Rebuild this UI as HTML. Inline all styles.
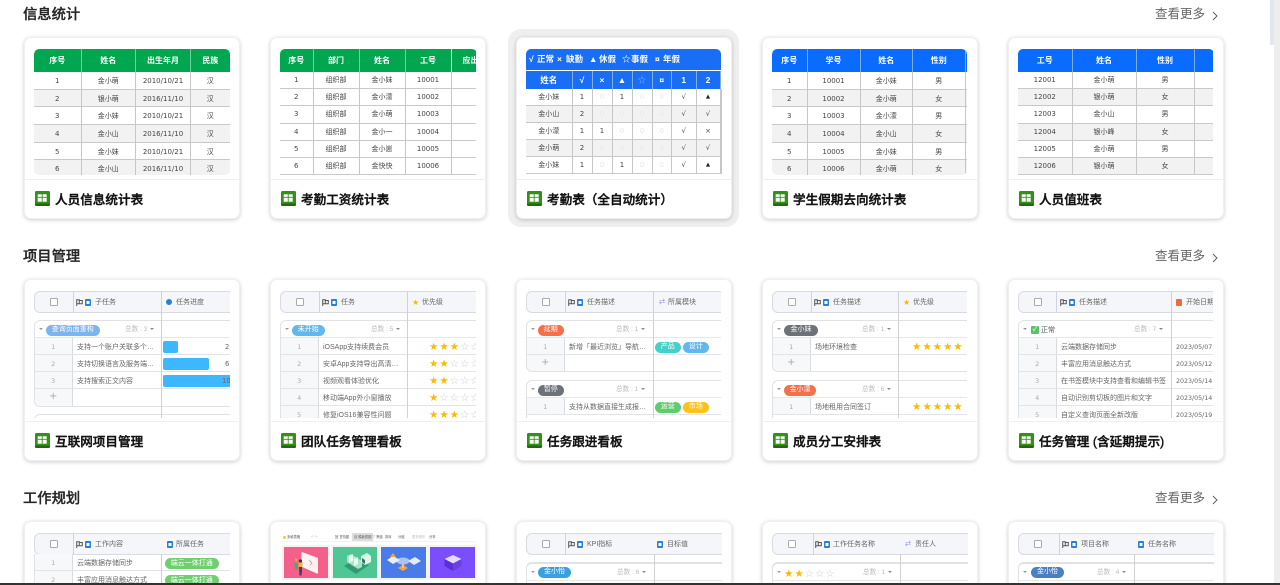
<!DOCTYPE html>
<html lang="zh-CN">
<head>
<meta charset="utf-8">
<title>模板</title>
<style>
*{box-sizing:border-box;margin:0;padding:0}
html,body{width:1280px;height:585px;overflow:hidden;background:#fff}
body{position:relative;font-family:"Liberation Sans","Noto Sans CJK SC",sans-serif;color:#333}
.h{position:absolute;left:23px;font-size:14.3px;line-height:20px;color:#262626;font-weight:500;-webkit-text-stroke:.3px #262626;filter:blur(.25px)}
.m{position:absolute;left:1155px;font-size:12.5px;line-height:20px;color:#666;filter:blur(.2px)}
.ch{position:absolute;left:1211px;width:8px;height:10px}
.ring{position:absolute;left:508px;top:29px;width:231px;height:198px;background:#efefef;border-radius:13px}
.c{position:absolute;width:216px;height:182px;background:#fff;border-radius:7px;border:1px solid #f0f0f0;box-shadow:0 1px 4px rgba(0,0,0,.2);overflow:hidden}
.c.low{height:62px;border-bottom:0;border-radius:7px 7px 0 0}
.pv{position:absolute;left:9px;top:11px;width:196px;height:126px;overflow:hidden;filter:blur(.3px)}
.pv.k{height:127px}
.low .pv.k{height:50px}
.ft{position:absolute;left:0;top:141px;width:214px;height:40px;border-top:1px solid #f0f0f0}
.ic{position:absolute;left:10px;top:11px;width:15px;height:15px}
.tt{position:absolute;left:30px;top:10px;font-size:12.6px;line-height:20px;font-weight:500;color:#111;-webkit-text-stroke:.4px #111;white-space:nowrap;filter:blur(.2px)}
table{border-collapse:collapse;table-layout:fixed;font-size:7px;color:#444;text-align:center;position:absolute;left:0;top:0}
th{height:22.5px;color:#fff;font-size:8px;font-weight:700;border-right:1px solid rgba(255,255,255,.45)}
td{border-right:1px solid #c6c6c6;border-bottom:1px solid #c9c9c9;font-family:"DejaVu Sans","Noto Sans CJK SC",sans-serif;overflow:hidden;white-space:nowrap}
.gr th{background:#00a650}.bl th{background:#0a6cff}
.a td{height:17.7px;padding-top:1px}.b td{height:17.2px}
.z tr:nth-child(even) td{background:#f2f2f2}
.rd{border-radius:5px 5px 0 0;overflow:hidden}
.pv.t{border-radius:5px}
.ban{position:absolute;left:0;top:0;width:195px;height:21px;background:#1a6df5;border-radius:5px 5px 0 0;color:#fff;font-size:8.5px;font-weight:700;line-height:21px;white-space:nowrap}
.ban span{position:absolute;top:0}
.att{top:22px}
.att th{height:17.5px;background:#1a6df5;font-size:8.5px;border-right:1px solid rgba(255,255,255,.45)}
.att td{height:17.1px}
.att td.o{color:#e8e8e8}
.att td.s{font-size:5.5px;color:#222}
.hd{position:absolute;left:0;top:0;width:230px;height:21.5px;background:#f5f6fa;border:1px solid #d8dbe2;border-radius:6px;font-size:7px;color:#666}
.cb{position:absolute;top:6px;width:7.5px;height:7.5px;border:1px solid #aaa;border-radius:1.5px;background:#fff}
.hl{position:absolute;top:-1px;bottom:-1px;width:1px;background:#d0d3d8}
.vl{position:absolute;top:0;bottom:0;width:1.2px;background:#cfd1d5;z-index:3}
.lb{position:absolute;top:0;line-height:22px;white-space:nowrap}
.fl{position:absolute;top:6.500px;width:7px;height:7px}
.dc{position:absolute;top:6.500px;width:6px;height:7px}
.g{position:absolute;left:0;width:240px;border:1px solid #e0e2e6;border-radius:6px;overflow:hidden;background:#fff}
.gh{position:relative;height:17px;border-bottom:1.4px solid #e6e7ea}
.ar{position:absolute;left:4px;top:7px;width:0;height:0;border-left:2px solid transparent;border-right:2px solid transparent;border-top:2.5px solid #999}
.p{position:absolute;left:11px;top:4px;height:10.5px;line-height:10.5px;border-radius:6px;color:#fff;font-size:7px;text-align:center;white-space:nowrap}
.tot{position:absolute;top:0;line-height:18.500px;font-size:6.6px;color:#bbb;white-space:nowrap}
.tot:after{content:"";display:inline-block;margin-left:3px;vertical-align:1px;border-left:2px solid transparent;border-right:2px solid transparent;border-top:2.5px solid #888}
.r{position:relative;height:17.1px;border-bottom:1px solid #e3e4e8;font-size:7px;color:#666;white-space:nowrap}
.n{position:absolute;left:0;top:0;height:100%;background:#f7f8fa;border-right:1px solid #d8dbe0;text-align:center;line-height:18px;color:#aaa;font-size:6.5px;font-family:"DejaVu Sans",sans-serif}
.x{position:absolute;top:0;line-height:19.500px}
.st{position:absolute;top:0;line-height:18px;font-family:"DejaVu Sans",sans-serif;font-size:10.5px;letter-spacing:.9px;color:#fcb900}
.st u{text-decoration:none;color:#ccc}
.bar{position:absolute;left:1.5px;top:2.5px;height:12.5px;background:#3db8ff;border-radius:2px}
.v{position:absolute;top:0;line-height:19px;color:#666;font-family:"DejaVu Sans",sans-serif;font-size:6.8px}
.d{font-family:"DejaVu Sans",sans-serif;font-size:6.3px}
.tile{position:absolute;top:13.500px;width:44.5px;height:31.5px;box-shadow:0 0 0 2px #f4f4f4}
.tb{position:absolute;left:0;top:0;width:196px;height:8.500px;font-size:3.3px;line-height:8px;color:#555;white-space:nowrap;background:#fff;border-bottom:1px solid #f2f2f2}
.tb span{position:absolute;top:0}
.sb{position:absolute;left:1274px;top:0;width:6px;height:585px;background:#eee}
.th{position:absolute;left:1270px;top:0;width:4.3px;height:45px;background:#e1e6ef;border-radius:0 0 1px 1px}
.bot{position:absolute;left:0;top:583px;width:1280px;height:2px;background:#333}
</style>
</head>
<body>
<svg width="0" height="0" style="position:absolute">
<defs>
<symbol id="fi" viewBox="0 0 15 15"><rect width="15" height="15" rx="1.5" fill="#35901a"/><path d="M0 12.500h15v1A1.500 1.500 0 0 1 13.500 15h-12A1.500 1.500 0 0 1 0 13.500z" fill="#1f6a0c"/><rect x="2.700" y="3.300" width="9" height="7.400" fill="#fff"/><path d="M2.700 6.300h9M7.200 3.300v7.400" stroke="#35901a" stroke-width=".9"/></symbol>
<symbol id="fg" viewBox="0 0 7 7"><path d="M.7 7V.7h2.600v4H.7M3.300 1.500H6.300V4.700H3.300" fill="none" stroke="#555" stroke-width="1"/></symbol>
<symbol id="dc" viewBox="0 0 6 7"><rect width="6" height="7" rx="1" fill="#2a7fd9"/><rect x="1.500" y="2" width="3" height="3" fill="#fff"/></symbol>
<symbol id="chv" viewBox="0 0 8 10"><path d="M2 1l4 4-4 4" fill="none" stroke="#555" stroke-width=".9"/></symbol>
</defs>
</svg>

<div class="h" style="top:5px">信息统计</div>
<div class="m" style="top:4px">查看更多</div><svg class="ch" style="top:11px"><use href="#chv"/></svg>

<div class="c" style="left:24px;top:37px"><div class="pv t"><table class="gr z a rd" style="width:196px"><colgroup><col style="width:47px"><col style="width:54.500px"><col style="width:55px"><col style="width:39.500px"></colgroup>
<thead><tr><th>序号</th><th>姓名</th><th>出生年月</th><th>民族</th></tr></thead>
<tbody><tr><td>1</td><td>金小萌</td><td>2010/10/21</td><td>汉</td></tr><tr><td>2</td><td>银小萌</td><td>2016/11/10</td><td>汉</td></tr><tr><td>3</td><td>金小妹</td><td>2010/10/21</td><td>汉</td></tr><tr><td>4</td><td>金小山</td><td>2016/11/10</td><td>汉</td></tr><tr><td>5</td><td>金小妹</td><td>2010/10/21</td><td>汉</td></tr><tr><td>6</td><td>金小山</td><td>2016/11/10</td><td>汉</td></tr></tbody></table></div>
<div class="ft"><svg class="ic"><use href="#fi"/></svg><div class="tt">人员信息统计表</div></div></div>

<div class="c" style="left:270px;top:37px"><div class="pv"><table class="gr b rd" style="width:196px"><colgroup><col style="width:33px"><col style="width:46px"><col style="width:46px"><col style="width:46px"><col style="width:25px"></colgroup>
<thead><tr><th>序号</th><th>部门</th><th>姓名</th><th>工号</th><th style="text-align:left;padding-left:11px;white-space:nowrap;overflow:hidden;border:0">应出</th></tr></thead>
<tbody><tr><td>1</td><td>组织部</td><td>金小妹</td><td>10001</td><td></td></tr><tr><td>2</td><td>组织部</td><td>金小濛</td><td>10002</td><td></td></tr><tr><td>3</td><td>组织部</td><td>金小萌</td><td>10003</td><td></td></tr><tr><td>4</td><td>组织部</td><td>金小一</td><td>10004</td><td></td></tr><tr><td>5</td><td>组织部</td><td>金小崽</td><td>10005</td><td></td></tr><tr><td>6</td><td>组织部</td><td>金快快</td><td>10006</td><td></td></tr></tbody></table></div>
<div class="ft"><svg class="ic"><use href="#fi"/></svg><div class="tt">考勤工资统计表</div></div></div>

<div class="ring"></div>
<div class="c" style="left:516px;top:37px"><div class="pv"><div class="ban"><span style="left:3px">√</span><span style="left:11px">正常</span><span style="left:31px">×</span><span style="left:40px">缺勤</span><span style="left:63px">▲</span><span style="left:73px">休假</span><span style="left:96px">☆</span><span style="left:105px">事假</span><span style="left:129px">¤</span><span style="left:137px">年假</span></div>
<table class="att z" style="width:195px"><colgroup><col style="width:46px"><col style="width:20px"><col style="width:20px"><col style="width:20px"><col style="width:20px"><col style="width:19.500px"><col style="width:24.500px"><col style="width:24px"><col style="width:1px"></colgroup>
<thead><tr><th>姓名</th><th>√</th><th>×</th><th>▲</th><th style="color:#7fa9f5">☆</th><th>¤</th><th>1</th><th>2</th><th></th></tr></thead>
<tbody><tr><td>金小妹</td><td>1</td><td class="o">0</td><td>1</td><td class="o">0</td><td class="o">0</td><td>√</td><td class="s">▲</td><td></td></tr><tr><td>金小山</td><td>2</td><td class="o">0</td><td class="o">0</td><td class="o">0</td><td class="o">0</td><td>√</td><td>√</td><td></td></tr><tr><td>金小濛</td><td>1</td><td>1</td><td class="o">0</td><td class="o">0</td><td class="o">0</td><td>√</td><td>×</td><td></td></tr><tr><td>金小萌</td><td>2</td><td class="o">0</td><td class="o">0</td><td class="o">0</td><td class="o">0</td><td>√</td><td>√</td><td></td></tr><tr><td>金小妹</td><td>1</td><td class="o">0</td><td>1</td><td class="o">0</td><td class="o">0</td><td>√</td><td class="s">▲</td><td></td></tr></tbody></table></div>
<div class="ft"><svg class="ic"><use href="#fi"/></svg><div class="tt">考勤表（全自动统计）</div></div></div>

<div class="c" style="left:762px;top:37px"><div class="pv t" style="width:195px"><table class="bl z a rd" style="width:195px"><colgroup><col style="width:35px"><col style="width:53px"><col style="width:52.500px"><col style="width:52.500px"><col style="width:2px"></colgroup>
<thead><tr><th>序号</th><th>学号</th><th>姓名</th><th>性别</th><th style="border:0"></th></tr></thead>
<tbody><tr><td>1</td><td>10001</td><td>金小妹</td><td>男</td><td style="border-right:0"></td></tr><tr><td>2</td><td>10002</td><td>金小萌</td><td>女</td><td style="border-right:0"></td></tr><tr><td>3</td><td>10003</td><td>金小濛</td><td>男</td><td style="border-right:0"></td></tr><tr><td>4</td><td>10004</td><td>金小山</td><td>女</td><td style="border-right:0"></td></tr><tr><td>5</td><td>10005</td><td>金小妹</td><td>男</td><td style="border-right:0"></td></tr><tr><td>6</td><td>10006</td><td>金小萌</td><td>女</td><td style="border-right:0"></td></tr></tbody></table></div>
<div class="ft"><svg class="ic"><use href="#fi"/></svg><div class="tt">学生假期去向统计表</div></div></div>

<div class="c" style="left:1008px;top:37px"><div class="pv" style="width:195px"><table class="bl z b rd" style="width:195px"><colgroup><col style="width:54px"><col style="width:64px"><col style="width:58px"><col style="width:19px"></colgroup>
<thead><tr><th>工号</th><th>姓名</th><th>性别</th><th style="border:0"></th></tr></thead>
<tbody><tr><td>12001</td><td>金小萌</td><td>男</td><td></td></tr><tr><td>12002</td><td>银小萌</td><td>女</td><td></td></tr><tr><td>12003</td><td>金小山</td><td>男</td><td></td></tr><tr><td>12004</td><td>银小峰</td><td>女</td><td></td></tr><tr><td>12005</td><td>金小萌</td><td>男</td><td></td></tr><tr><td>12006</td><td>银小萌</td><td>女</td><td></td></tr></tbody></table></div>
<div class="ft"><svg class="ic"><use href="#fi"/></svg><div class="tt">人员值班表</div></div></div>

<div class="h" style="top:247px">项目管理</div>
<div class="m" style="top:246px">查看更多</div><svg class="ch" style="top:253px"><use href="#chv"/></svg>

<div class="c" style="left:24px;top:279px"><div class="pv k">
<div class="hd"><span class="cb" style="left:15px"></span><span class="hl" style="left:37.500px"></span><svg class="fl" style="left:41px"><use href="#fg"/></svg><svg class="dc" style="left:50px"><use href="#dc"/></svg><span class="lb" style="left:60px">子任务</span>
<span style="position:absolute;left:131px;top:7px;width:6px;height:6px;border-radius:50%;background:#2a7fd9"></span><span class="lb" style="left:141px">任务进度</span></div>
<div class="vl" style="left:127px"></div>
<div class="g" style="top:29px;height:87px"><div class="gh"><span class="ar"></span><span class="p" style="width:53.500px;background:#7cb4f0">查询页面重构</span><span class="tot" style="left:90px">总数 : 3</span></div>
<div class="r"><span class="n" style="width:37.500px">1</span><span class="x" style="left:42px">支持一个账户关联多个…</span><span class="bar" style="left:128px;width:15px"></span><span class="v" style="left:190px">2</span></div>
<div class="r"><span class="n" style="width:37.500px">2</span><span class="x" style="left:42px">支持切换语言及服务端…</span><span class="bar" style="left:128px;width:46px"></span><span class="v" style="left:190px">6</span></div>
<div class="r"><span class="n" style="width:37.500px">3</span><span class="x" style="left:42px">支持搜索正文内容</span><span class="bar" style="left:128px;width:70px"></span><span class="v" style="left:187px">10</span></div>
<div class="r" style="border:0"><span class="n" style="width:37.500px;font-size:10px;line-height:16px">+</span></div></div>
<div class="g" style="top:123px;height:20px"></div>
</div>
<div class="ft"><svg class="ic"><use href="#fi"/></svg><div class="tt">互联网项目管理</div></div></div>

<div class="c" style="left:270px;top:279px"><div class="pv k">
<div class="hd"><span class="cb" style="left:15px"></span><span class="hl" style="left:37.500px"></span><svg class="fl" style="left:41px"><use href="#fg"/></svg><svg class="dc" style="left:50px"><use href="#dc"/></svg><span class="lb" style="left:60px">任务</span>
<span class="lb" style="left:131px;color:#fcb900;font-size:8px;font-family:'DejaVu Sans',sans-serif">★</span><span class="lb" style="left:141px">优先级</span></div>
<div class="vl" style="left:127px"></div>
<div class="g" style="top:29px;height:110px"><div class="gh"><span class="ar"></span><span class="p" style="width:32.500px;background:#62b8ec">未开始</span><span class="tot" style="left:90px">总数 : 5</span></div>
<div class="r"><span class="n" style="width:37.500px">1</span><span class="x" style="left:42px">iOSApp支持续费会员</span><span class="st" style="left:148px">★★★<u>☆☆</u></span></div>
<div class="r"><span class="n" style="width:37.500px">2</span><span class="x" style="left:42px">安卓App支持导出高清…</span><span class="st" style="left:148px">★★<u>☆☆☆</u></span></div>
<div class="r"><span class="n" style="width:37.500px">3</span><span class="x" style="left:42px">视频观看体验优化</span><span class="st" style="left:148px">★★<u>☆☆☆</u></span></div>
<div class="r"><span class="n" style="width:37.500px">4</span><span class="x" style="left:42px">移动端App外小窗播放</span><span class="st" style="left:148px">★<u>☆☆☆☆</u></span></div>
<div class="r"><span class="n" style="width:37.500px">5</span><span class="x" style="left:42px">修复iOS16兼容性问题</span><span class="st" style="left:148px">★★★<u>☆☆</u></span></div></div>
</div>
<div class="ft"><svg class="ic"><use href="#fi"/></svg><div class="tt">团队任务管理看板</div></div></div>

<div class="c" style="left:516px;top:279px"><div class="pv k" style="width:195px">
<div class="hd"><span class="cb" style="left:15px"></span><span class="hl" style="left:37.500px"></span><svg class="fl" style="left:41px"><use href="#fg"/></svg><svg class="dc" style="left:50px"><use href="#dc"/></svg><span class="lb" style="left:60px">任务描述</span>
<span class="lb" style="left:132px;color:#7a7adf;font-size:6px">⇄</span><span class="lb" style="left:141px">所属模块</span></div>
<div class="vl" style="left:126.500px"></div>
<div class="g" style="top:29px;height:52px"><div class="gh"><span class="ar"></span><span class="p" style="width:25.500px;background:#f4704a">延期</span><span class="tot" style="left:89px">总数 : 1</span></div>
<div class="r"><span class="n" style="width:37.500px">1</span><span class="x" style="left:42px">新增「最近浏览」导航…</span><span class="p" style="left:128px;top:4px;width:25.500px;background:#45d0c8">产品</span><span class="p" style="left:156px;top:4px;width:25.500px;background:#62b8ec">设计</span></div>
<div class="r" style="border:0"><span class="n" style="width:37.500px;font-size:10px;line-height:16px">+</span></div></div>
<div class="g" style="top:89px;height:50px"><div class="gh"><span class="ar"></span><span class="p" style="width:25.500px;background:#6d7179">暂停</span><span class="tot" style="left:89px">总数 : 1</span></div>
<div class="r"><span class="n" style="width:37.500px">1</span><span class="x" style="left:42px">支持从数据直接生成报…</span><span class="p" style="left:128px;top:4px;width:25.500px;background:#62ca6f">运营</span><span class="p" style="left:156px;top:4px;width:25.500px;background:#fbc21a">市场</span></div></div>
</div>
<div class="ft"><svg class="ic"><use href="#fi"/></svg><div class="tt">任务跟进看板</div></div></div>

<div class="c" style="left:762px;top:279px"><div class="pv k" style="width:195px">
<div class="hd"><span class="cb" style="left:15px"></span><span class="hl" style="left:37.500px"></span><svg class="fl" style="left:41px"><use href="#fg"/></svg><svg class="dc" style="left:50px"><use href="#dc"/></svg><span class="lb" style="left:60px">任务描述</span>
<span class="lb" style="left:130px;color:#fcb900;font-size:8px;font-family:'DejaVu Sans',sans-serif">★</span><span class="lb" style="left:140px">优先级</span></div>
<div class="vl" style="left:126px"></div>
<div class="g" style="top:29px;height:52px"><div class="gh"><span class="ar"></span><span class="p" style="left:11px;width:34px;background:#6d7179">金小妹</span><span class="tot" style="left:89px">总数 : 1</span></div>
<div class="r"><span class="n" style="width:37.500px">1</span><span class="x" style="left:42px">场地环境检查</span><span class="st" style="left:139px">★★★★★</span></div>
<div class="r" style="border:0"><span class="n" style="width:37.500px;font-size:10px;line-height:16px">+</span></div></div>
<div class="g" style="top:89px;height:50px"><div class="gh"><span class="ar"></span><span class="p" style="left:11px;width:32px;background:#f4704a">金小濛</span><span class="tot" style="left:89px">总数 : 6</span></div>
<div class="r"><span class="n" style="width:37.500px">1</span><span class="x" style="left:42px">场地租用合同签订</span><span class="st" style="left:139px">★★★★★</span></div></div>
</div>
<div class="ft"><svg class="ic"><use href="#fi"/></svg><div class="tt">成员分工安排表</div></div></div>

<div class="c" style="left:1008px;top:279px"><div class="pv k" style="width:195px">
<div class="hd"><span class="cb" style="left:15px"></span><span class="hl" style="left:37px"></span><svg class="fl" style="left:41px"><use href="#fg"/></svg><svg class="dc" style="left:50px"><use href="#dc"/></svg><span class="lb" style="left:60px">任务描述</span>
<span style="position:absolute;left:157px;top:6.500px;width:6px;height:7px;border-radius:1px;background:#ef6a3a"></span><span class="lb" style="left:167px">开始日期</span></div>
<div class="vl" style="left:152.500px"></div>
<div class="g" style="top:29px;height:110px"><div class="gh"><span class="ar"></span><span style="position:absolute;left:12px;top:4.500px;width:8px;height:8px;background:#5cc26a;border-radius:1px;color:#fff;font-size:7px;line-height:8px;text-align:center">✓</span><span style="position:absolute;left:22px;top:0;line-height:19px;font-size:7px;color:#555">正常</span><span class="tot" style="left:115px">总数 : 7</span></div>
<div class="r"><span class="n" style="width:37.500px">1</span><span class="x" style="left:42px">云端数据存储同步</span><span class="x d" style="left:157px">2023/05/07</span></div>
<div class="r"><span class="n" style="width:37.500px">2</span><span class="x" style="left:42px">丰富应用消息触达方式</span><span class="x d" style="left:157px">2023/05/12</span></div>
<div class="r"><span class="n" style="width:37.500px">3</span><span class="x" style="left:42px">在书签模块中支持查看和编辑书签</span><span class="x d" style="left:157px">2023/05/14</span></div>
<div class="r"><span class="n" style="width:37.500px">4</span><span class="x" style="left:42px">自动识别剪切板的图片和文字</span><span class="x d" style="left:157px">2023/05/14</span></div>
<div class="r"><span class="n" style="width:37.500px">5</span><span class="x" style="left:42px">自定义查询页面全新改版</span><span class="x d" style="left:157px">2023/05/19</span></div></div>
</div>
<div class="ft"><svg class="ic"><use href="#fi"/></svg><div class="tt">任务管理 (含延期提示)</div></div></div>

<div class="h" style="top:489px">工作规划</div>
<div class="m" style="top:488px">查看更多</div><svg class="ch" style="top:495px"><use href="#chv"/></svg>

<div class="c low" style="left:24px;top:521px"><div class="pv k">
<div class="hd"><span class="cb" style="left:15px"></span><span class="hl" style="left:37.500px"></span><svg class="fl" style="left:41px"><use href="#fg"/></svg><svg class="dc" style="left:50px"><use href="#dc"/></svg><span class="lb" style="left:60px">工作内容</span>
<svg class="dc" style="left:132px"><use href="#dc"/></svg><span class="lb" style="left:141px">所属任务</span></div>
<div class="vl" style="left:127px;top:21px"></div>
<div style="position:absolute;left:0;top:21px;width:230px;border-left:1px solid #e0e2e6">
<div class="r"><span class="n" style="width:37.500px">1</span><span class="x" style="left:42px">云端数据存储同步</span><span class="p" style="left:130px;top:3.500px;height:11px;line-height:11px;width:53.500px;background:#6fcf6f">端云一体打通</span></div>
<div class="r"><span class="n" style="width:37.500px">2</span><span class="x" style="left:42px">丰富应用消息触达方式</span><span class="p" style="left:130px;top:3.500px;height:11px;line-height:11px;width:53.500px;background:#6fcf6f">端云一体打通</span></div>
</div></div></div>

<div class="c low" style="left:270px;top:521px"><div class="pv k">
<div class="tb"><span style="left:3px;width:3px;height:3px;top:2.500px;background:#f2c94c;border-radius:50%"></span><span style="left:7px">多维表格</span><span style="left:31px;color:#bbb">↶ ↷</span><span style="left:55px">回 甘特图</span><span style="left:72px;background:#ddd;padding:0 2px">目 模板视图</span><span style="left:92px">▽ 筛选</span><span style="left:105px">排序</span><span style="left:118px">分组</span><span style="left:132px;color:#bbb">更多操作</span><span style="left:149px">分享</span></div>
<div class="tile" style="left:3.700px;background:#f4608a"><svg width="45" height="32" viewBox="0 0 45 32" style="display:block"><path d="M18 5l16 6v16l-16-7z" fill="#fdf3f5"/><path d="M18 5v15l-1-.5V5.500z" fill="#e9c6d2"/><path d="M25 13l3 3-2 2" fill="none" stroke="#ef7a8e" stroke-width=".7"/><path d="M15 19h3v5l-.5 4.500h-2z" fill="#47395f"/><rect x="14.500" y="15" width="4" height="5" fill="#f2b135"/><circle cx="16.500" cy="14" r="1.600" fill="#3a3357"/><path d="M10 15l1.500 8h2l.5-6z" fill="#4aa87a"/><path d="M11 11l1 5 1.500-4z" fill="#f2b135"/></svg></div>
<div class="tile" style="left:52.500px;background:#4ec795"><svg width="45" height="32" viewBox="0 0 45 32" style="display:block"><path d="M11 19l13-8 12 7-13 9z" fill="#2e9b72"/><path d="M14 9l4-2 11 7v6l-4 2-11-7z" fill="#a9e6c9"/><path d="M16 9l4-2v7l-4 2zM21 12l4-2v7l-4 2z" fill="#e8fbf2"/><path d="M28 9l6-3 4 3v6l-6 3-4-3z" fill="#def7ea"/><path d="M29 11l3 2v4l-3-2z" fill="#3b6f68"/></svg></div>
<div class="tile" style="left:101px;background:#4a7be8"><svg width="45" height="32" viewBox="0 0 45 32" style="display:block"><ellipse cx="22" cy="14" rx="6.500" ry="3.500" fill="#a9c3f7"/><path d="M6 13l6-4 7 4-7 4z" fill="#e8eefc"/><path d="M9 10l3-4 3 4z" fill="#f2a33a"/><path d="M27 14l7-4 6 4-7 4z" fill="#e3ebfc"/><path d="M17 21l5-3 5 3-5 3z" fill="#f2a33a"/><rect x="21" y="17" width="2" height="4" fill="#f6c27a"/></svg></div>
<div class="tile" style="left:150px;background:#7c4dff"><svg width="45" height="32" viewBox="0 0 45 32" style="display:block"><path d="M23 8l8.500 4-8.500 4.500-8.500-4.500z" fill="#e4dcff"/><path d="M14.500 12v7l8.500 5v-7.500z" fill="#5a2fd6"/><path d="M31.500 12v7l-8.500 5v-7.500z" fill="#6b3fe6"/></svg></div>
</div></div>

<div class="c low" style="left:516px;top:521px"><div class="pv k" style="width:196px">
<div class="hd"><span class="cb" style="left:15px"></span><span class="hl" style="left:38px"></span><svg class="fl" style="left:41px"><use href="#fg"/></svg><svg class="dc" style="left:50px"><use href="#dc"/></svg><span class="lb" style="left:60px">KPI指标</span>
<svg class="dc" style="left:130px"><use href="#dc"/></svg><span class="lb" style="left:140px">目标值</span></div>
<div class="vl" style="left:127.500px;top:21px"></div>
<div class="g" style="top:29px;height:50px;border-top-width:2px"><div class="gh"><span class="ar"></span><span class="p" style="left:11px;top:3px;width:33px;background:#3aa0e0">金小怡</span><span class="tot" style="left:90px">总数 : 6</span></div></div>
</div></div>

<div class="c low" style="left:762px;top:521px"><div class="pv k" style="width:196px">
<div class="hd"><span class="cb" style="left:15px"></span><span class="hl" style="left:39.500px"></span><svg class="fl" style="left:42px"><use href="#fg"/></svg><svg class="dc" style="left:51px"><use href="#dc"/></svg><span class="lb" style="left:60px">工作任务名称</span>
<span class="lb" style="left:132px;color:#7a7adf;font-size:6px">⇄</span><span class="lb" style="left:142px">责任人</span></div>
<div class="vl" style="left:128px;top:21px"></div>
<div class="g" style="top:29px;height:50px;border-top-width:2px"><div class="gh"><span class="ar"></span><span class="st" style="left:11px;top:1px">★★<u>☆☆☆</u></span><span class="tot" style="left:90px">总数 : 1</span></div></div>
</div></div>

<div class="c low" style="left:1008px;top:521px"><div class="pv k" style="width:196px">
<div class="hd"><span class="cb" style="left:15px"></span><span class="hl" style="left:40px"></span><svg class="fl" style="left:43px"><use href="#fg"/></svg><svg class="dc" style="left:52px"><use href="#dc"/></svg><span class="lb" style="left:62px">项目名称</span>
<svg class="dc" style="left:119px"><use href="#dc"/></svg><span class="lb" style="left:129px">任务名称</span></div>
<div class="vl" style="left:115.500px;top:21px"></div>
<div class="g" style="top:29px;height:50px;border-top-width:2px"><div class="gh"><span class="ar"></span><span class="p" style="left:12px;top:3px;width:33px;background:#4a7fc0">金小怡</span><span class="tot" style="left:78px">总数 : 4</span></div></div>
</div></div>

<div class="sb"></div><div class="th"></div>
<div class="bot"></div>
</body>
</html>
